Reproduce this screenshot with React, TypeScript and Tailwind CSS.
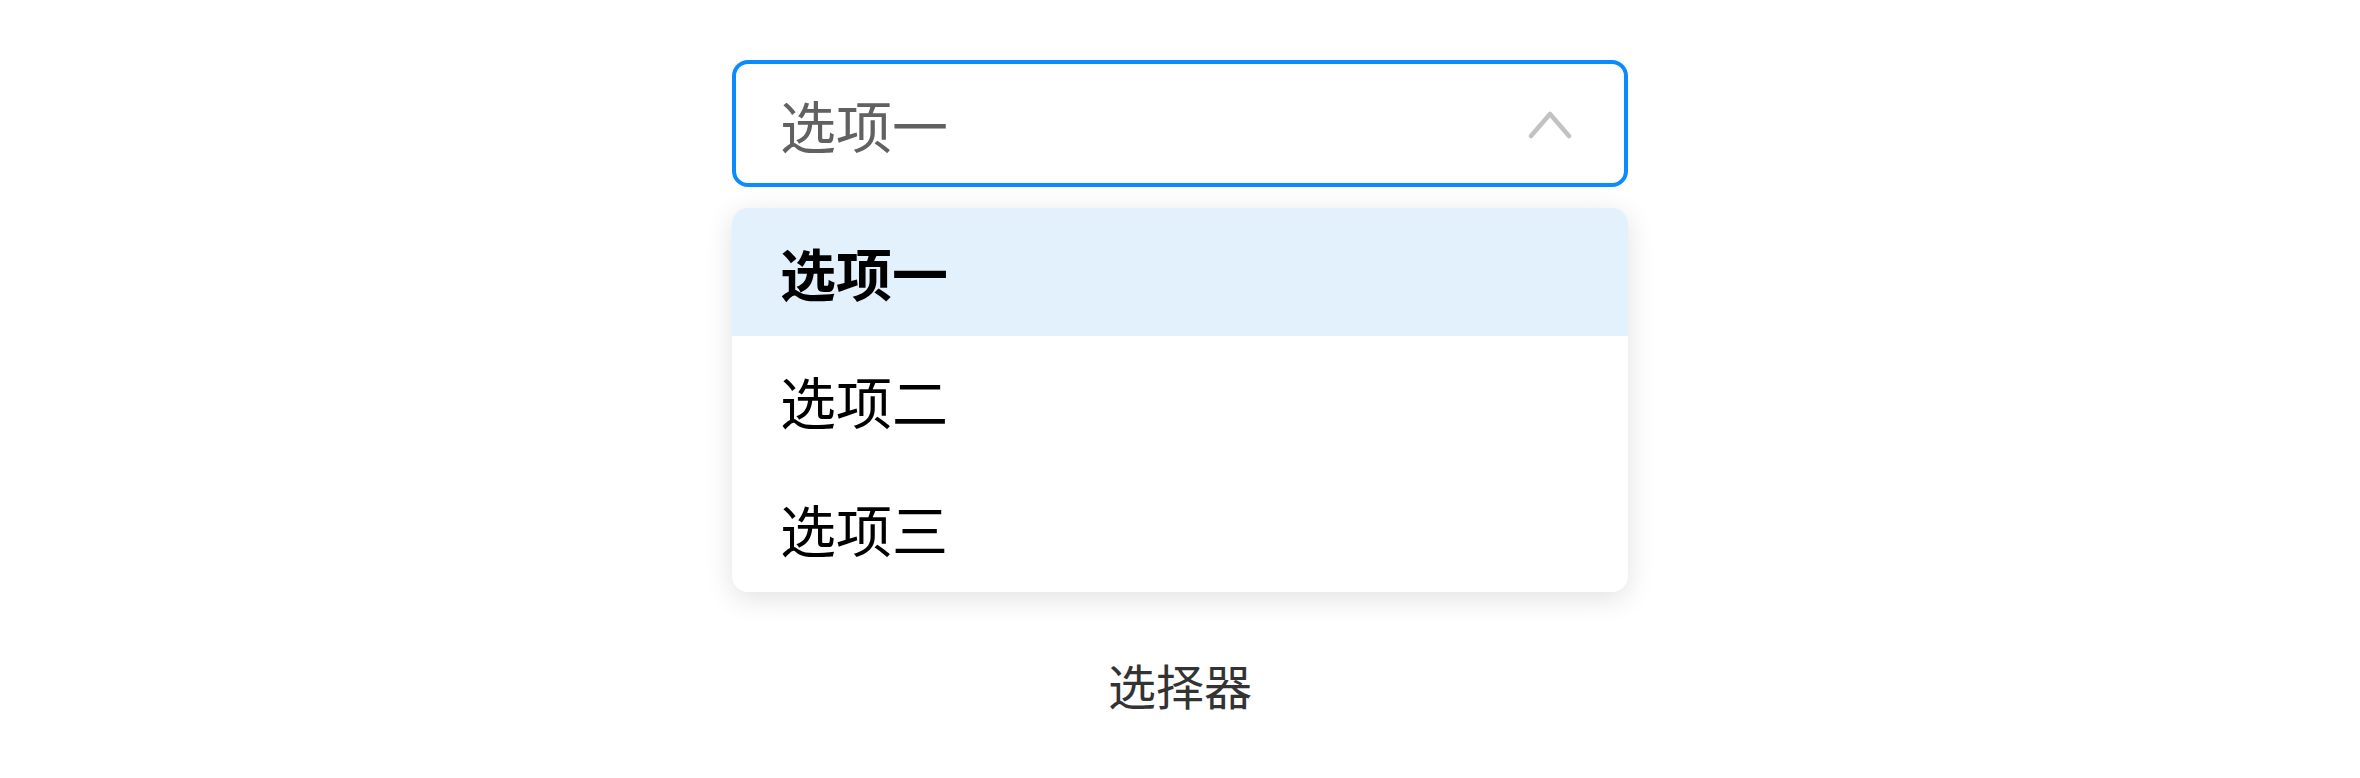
export default function App() {
  const font = { fontFamily: '"Noto Sans CJK SC", "Noto Sans", sans-serif' };
  return (
    <div className="min-h-[778px] w-full bg-white flex flex-col items-center pt-[60px]" style={font}>
      <div className="w-[896px] flex flex-col">
        <div className="h-[127px] border-[4px] border-[#0a8cff] rounded-[16px] flex items-center justify-between pl-[44px] pr-[51px] bg-white">
          <span className="text-[56px] leading-none text-[#616161]">选项一</span>
          <svg width="46" height="32" viewBox="0 0 46 32" className="block">
            <polyline points="4,28 23,6 42,28" fill="none" stroke="#c2c2c2" strokeWidth="4.5" strokeLinecap="round" strokeLinejoin="round" />
          </svg>
        </div>
        <div className="mt-[21px] rounded-[16px] bg-white overflow-hidden shadow-[0_6px_28px_rgba(0,0,0,0.12)]">
          <div className="h-[128px] bg-[#e3f1fd] flex items-center pl-[48px]">
            <span className="text-[56px] leading-none font-bold text-black">选项一</span>
          </div>
          <div className="h-[128px] flex items-center pl-[48px]">
            <span className="text-[56px] leading-none text-black">选项二</span>
          </div>
          <div className="h-[128px] flex items-center pl-[48px]">
            <span className="text-[56px] leading-none text-black">选项三</span>
          </div>
        </div>
      </div>
      <div className="mt-[56px] h-[72px] flex items-center text-[48px] leading-none text-[#333333]">选择器</div>
    </div>
  );
}
